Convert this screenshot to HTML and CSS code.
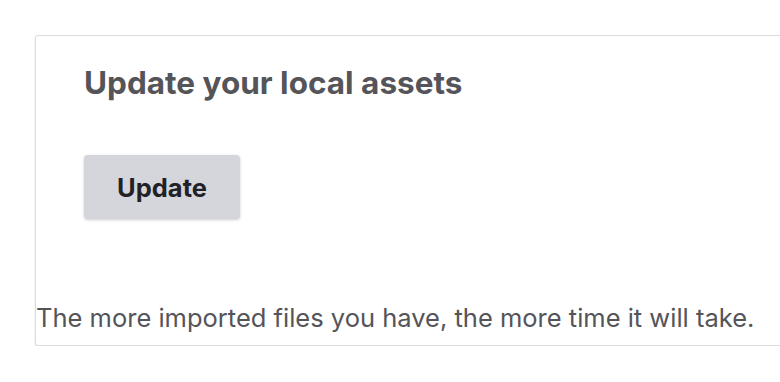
FILE: index.html
```html
<!DOCTYPE html>
<html>
<head>
<meta charset="utf-8">
<link rel="stylesheet" href="styles.css">
</head>
<body>
<div class="card">
  <div class="section">
    <h2 class="title">Update your local assets</h2>
    <button class="btn">Update</button>
  </div>
  <p class="note">The more imported files you have, the more time it will take.</p>
</div>
</body>
</html>
```
FILE: styles.css
```css
html, body {
  margin: 0;
  padding: 0;
  background: #fff;
  overflow: hidden;
}
body {
  font-family: Inter, "Noto Sans", sans-serif;
  color: #545459;
}
.card {
  margin: 35px 0 0 35px;
  height: 309px;
  border: 1px solid #dcdce0;
  border-right: none;
  border-radius: 3px 0 0 3px;
  box-shadow: 0 2px 3px rgba(0, 0, 0, 0.08);
  display: flex;
  flex-direction: column;
  justify-content: space-between;
}
.section {
  padding: 28px 48px 0;
}
.title {
  margin: 0;
  font-size: 31.5px;
  font-weight: 700;
  line-height: 38px;
  color: #545459;
}
.btn {
  display: block;
  margin-top: 53px;
  width: 156px;
  height: 64px;
  border: none;
  border-radius: 4px;
  background: #d5d6db;
  box-shadow: 0 1px 3px rgba(0, 0, 0, 0.2);
  font-family: inherit;
  font-size: 25.5px;
  font-weight: 700;
  color: #222226;
  padding: 0;
}
.note {
  margin: 0 0 12px 0;
  font-size: 25.5px;
  line-height: 31px;
  color: #545459;
}
```
